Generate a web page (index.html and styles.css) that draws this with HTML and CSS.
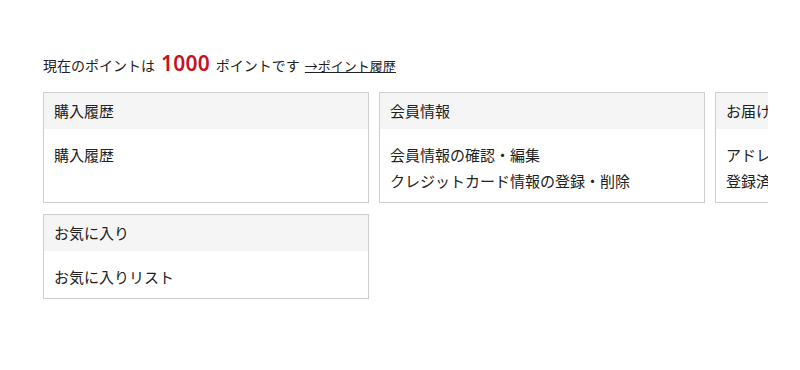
FILE: index.html
```html
<!DOCTYPE html>
<html lang="ja">
<head>
<meta charset="utf-8">
<link rel="stylesheet" href="styles.css">
</head>
<body>
<div class="wrap">
  <p class="points">現在のポイントは<span class="num">1000</span>ポイントです<a class="hist" href="#">→ポイント履歴</a></p>
  <div class="grid">
    <section class="card">
      <h2 class="card-head">購入履歴</h2>
      <ul class="card-body">
        <li>購入履歴</li>
      </ul>
    </section>
    <section class="card">
      <h2 class="card-head">会員情報</h2>
      <ul class="card-body">
        <li>会員情報の確認・編集</li>
        <li>クレジットカード情報の登録・削除</li>
      </ul>
    </section>
    <section class="card">
      <h2 class="card-head">お届け先情報</h2>
      <ul class="card-body">
        <li>アドレス帳の確認・編集</li>
        <li>登録済みのお届け先</li>
      </ul>
    </section>
    <section class="card">
      <h2 class="card-head">お気に入り</h2>
      <ul class="card-body">
        <li>お気に入りリスト</li>
      </ul>
    </section>
  </div>
</div>
</body>
</html>
```
FILE: styles.css
```css
html, body {
  margin: 0;
  padding: 0;
  background: #fff;
}
body {
  font-family: "Noto Sans CJK JP", "Noto Sans", sans-serif;
  color: #222;
}
.wrap {
  margin-left: 43px;
  width: 725px;
  overflow: hidden;
  padding-top: 50px;
}
.points {
  margin: 0 0 13px;
  font-size: 14px;
  line-height: 26px;
  white-space: nowrap;
}
.num {
  color: #c8101e;
  font-size: 21px;
  font-weight: 600;
  font-family: "Noto Sans", sans-serif;
  margin: 0 6px 0 6px;
  letter-spacing: 0.2px;
}
.hist {
  color: #222;
  text-decoration: underline;
  font-size: 13px;
  margin-left: 5px;
}
.grid {
  display: grid;
  grid-template-columns: repeat(3, 326px);
  gap: 11px 10px;
  width: 998px;
}
.card {
  border: 1px solid #cfcfcf;
  background: #fff;
}
.card-head {
  margin: 0;
  background: #f5f5f5;
  height: 36px;
  line-height: 36px;
  padding: 0 10px;
  font-size: 15px;
  font-weight: 400;
  white-space: nowrap;
}
.card-body {
  list-style: none;
  margin: 0;
  padding: 13px 10px 8px;
  font-size: 15px;
  line-height: 26px;
  white-space: nowrap;
}
```
